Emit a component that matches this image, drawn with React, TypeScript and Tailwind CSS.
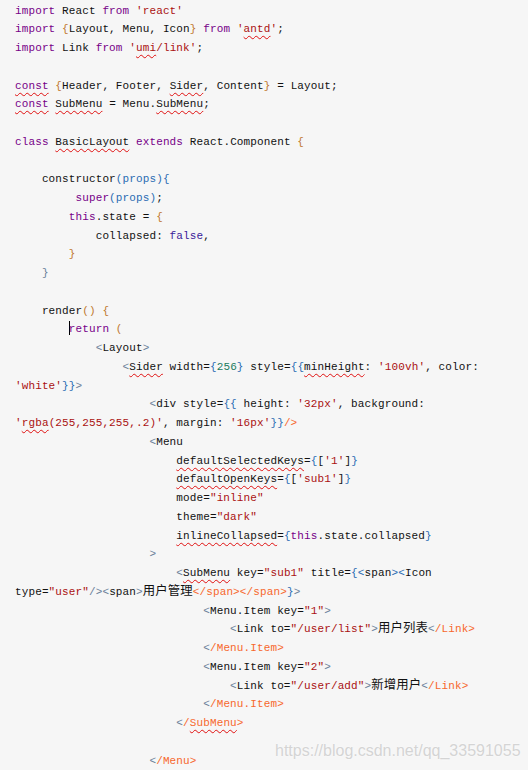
import React from "react";

type Tok = [string, string?];

const K = "text-[#770088]";
const S = "text-[#aa1111]";
const B = "text-[#c0782e]";
const P = "text-[#2a6cb3]";
const G = "text-[#6a7f99]";
const O = "text-[#f7682d]";
const N = "text-[#1a7a5e]";
const A = "text-[#3a1a99]";
const W = "underline decoration-wavy decoration-[#e01010] decoration-1 underline-offset-[3px]";
const C = "text-[12.4px]";

const lines: { i: number; t: Tok[] }[] = [
  { i: 0, t: [["import", K], [" React "], ["from", K], [" "], ["'react'", S]] },
  { i: 0, t: [["import", K], [" "], ["{", B], ["Layout, Menu, Icon"], ["}", B], [" "], ["from", K], [" "], ["'", S], ["antd", S + " " + W], ["'", S], [";"]] },
  { i: 0, t: [["import", K], [" Link "], ["from", K], [" "], ["'", S], ["umi", S + " " + W], ["/link'", S], [";"]] },
  { i: 0, t: [] },
  { i: 0, t: [["const", K + " " + W], [" "], ["{", B], ["Header, Footer, "], ["Sider", W], [", Content"], ["}", B], [" = Layout;"]] },
  { i: 0, t: [["const", K + " " + W], [" "], ["SubMenu", W], [" = Menu."], ["SubMenu", W], [";"]] },
  { i: 0, t: [] },
  { i: 0, t: [["class", K], [" "], ["BasicLayout", W], [" "], ["extends", K], [" React.Component "], ["{", B]] },
  { i: 0, t: [] },
  { i: 4, t: [["constructor"], ["(", P], ["props", P], [")", P], ["{", P]] },
  { i: 9, t: [["super", K], ["(", P], ["props", P], [")", P], [";"]] },
  { i: 8, t: [["this", K], [".state = "], ["{", B]] },
  { i: 12, t: [["collapsed: "], ["false", A], [","]] },
  { i: 8, t: [["}", B]] },
  { i: 4, t: [["}", G]] },
  { i: 0, t: [] },
  { i: 4, t: [["render"], ["()", B], [" "], ["{", B]] },
  { i: 8, t: [["CURSOR"], ["return", K], [" "], ["(", B]] },
  { i: 12, t: [["<", G], ["Layout"], [">", G]] },
  { i: 16, t: [["<", G], ["Sider", W], [" width="], ["{", P], ["256", N], ["}", P], [" style="], ["{{", P], ["minHeight", W], [": "], ["'100vh'", S], [", color:"]] },
  { i: 0, t: [["'white'", S], ["}}", P], [">", G]] },
  { i: 20, t: [["<", G], ["div style="], ["{{", P], [" height: "], ["'32px'", S], [", background:"]] },
  { i: 0, t: [["'", S], ["rgba", S + " " + W], ["(255,255,255,.2)'", S], [", margin: "], ["'16px'", S], ["}}", P], ["/>", O]] },
  { i: 20, t: [["<", G], ["Menu"]] },
  { i: 24, t: [["defaultSelectedKeys", W], ["="], ["{", P], ["["], ["'1'", S], ["]"], ["}", P]] },
  { i: 24, t: [["defaultOpenKeys", W], ["="], ["{", P], ["["], ["'sub1'", S], ["]"], ["}", P]] },
  { i: 24, t: [["mode="], ['"inline"', S]] },
  { i: 24, t: [["theme="], ['"dark"', S]] },
  { i: 24, t: [["inlineCollapsed", W], ["="], ["{", P], ["this", K], [".state.collapsed"], ["}", P]] },
  { i: 20, t: [[">", G]] },
  { i: 24, t: [["<", G], ["SubMenu", W], [" key="], ['"sub1"', S], [" title="], ["{", P], ["<", P], ["span"], [">", P], ["<", P], ["Icon"]] },
  { i: 0, t: [["type="], ['"user"', S], ["/>", G], ["<", G], ["span"], [">", G], ["用户管理", C], ["</span></span>", O], ["}", P], [">", G]] },
  { i: 28, t: [["<", G], ["Menu.Item key="], ['"1"', S], [">", G]] },
  { i: 32, t: [["<", G], ["Link to="], ['"/user/list"', S], [">", G], ["用户列表", C], ["<", G], ["/Link>", O]] },
  { i: 28, t: [["<", G], ["/Menu.Item>", O]] },
  { i: 28, t: [["<", G], ["Menu.Item key="], ['"2"', S], [">", G]] },
  { i: 32, t: [["<", G], ["Link to="], ['"/user/add"', S], [">", G], ["新增用户", C], ["<", G], ["/Link>", O]] },
  { i: 28, t: [["<", G], ["/Menu.Item>", O]] },
  { i: 24, t: [["<", G], ["/", O], ["SubMenu", O + " " + W], [">", O]] },
  { i: 0, t: [] },
  { i: 20, t: [["<", G], ["/Menu>", O]] },
];

export default function App() {
  return (
    <div className="relative w-[528px] h-[770px] overflow-hidden bg-[#f6f6f6]">
      <div
        className="pl-[15px] pt-[1.5px] text-[11px] leading-[18.75px] tracking-[0.12px] text-[#111] whitespace-pre"
        style={{ fontFamily: '"Liberation Mono", "Noto Sans CJK SC", monospace' }}
      >
        {lines.map((ln, idx) => (
          <div key={idx} className="h-[18.75px]">
            {" ".repeat(ln.i)}
            {ln.t.map((tk, j) =>
              tk[0] === "CURSOR" ? (
                <span key={j} className="inline-block w-[1.5px] -mr-[1.5px] h-[14px] bg-black align-[-3px]" />
              ) : (
                <span key={j} className={tk[1] ?? ""}>
                  {tk[0]}
                </span>
              )
            )}
          </div>
        ))}
      </div>
      <div
        className="absolute left-[275px] top-[739px] text-[16px] text-[#d4d4d4] [text-shadow:0_0_2px_#ffffff] whitespace-nowrap"
        style={{ fontFamily: '"Liberation Sans", Arial, sans-serif' }}
      >
        https://blog.csdn.net/qq_33591055
      </div>
    </div>
  );
}
